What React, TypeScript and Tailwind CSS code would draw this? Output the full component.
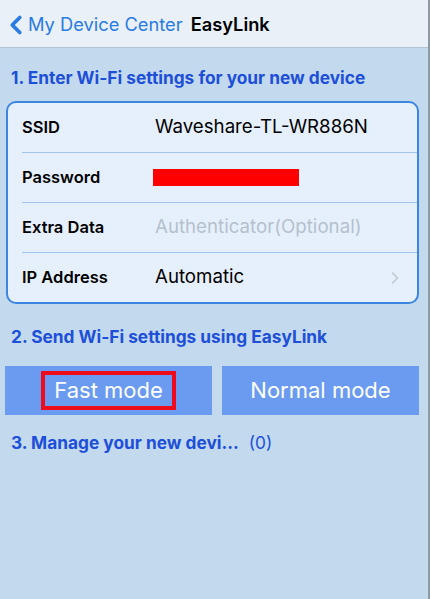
import { ChevronLeft, ChevronRight } from "lucide-react"

const rows = [
  { label: "SSID", value: "Waveshare-TL-WR886N" },
  { label: "Password", value: "" },
  { label: "Extra Data", value: "Authenticator(Optional)" },
  { label: "IP Address", value: "Automatic" },
]

export default function App() {
  return (
    <div
      className="w-[430px] h-[599px] bg-[#c3d9ee] border-r-2 border-[#8e99a3] overflow-hidden"
      style={{ fontFamily: "Inter, 'Noto Sans', sans-serif" }}
    >
      {/* Nav bar */}
      <div className="h-[48px] bg-[#e9f0f8] border-b border-[#b4c4d4] flex items-center pt-[3px]">
        <ChevronLeft className="w-[30px] h-[30px] text-[#2a7be2] ml-[1px]" strokeWidth={3} />
        <span className="text-[18.3px] text-[#2a7be2] ml-[-3px]">My Device Center</span>
        <span className="text-[18.3px] font-semibold text-black ml-[8px]">EasyLink</span>
      </div>

      <div className="h-[53px] flex items-center px-[11px] pt-[6px]">
        <span className="text-[17.3px] font-bold text-[#1d4fd8]">1. Enter Wi-Fi settings for your new device</span>
      </div>

      {/* Settings card */}
      <div className="ml-[6px] mr-[9px] h-[203px] rounded-[10px] border-2 border-[#3d86e0] bg-[#e6f0fc] flex flex-col">
        {rows.map((row, i) => (
          <div
            key={row.label}
            className={`flex-1 flex items-center ml-[14px] ${i < rows.length - 1 ? "border-b border-[#9ec3ee]" : ""}`}
          >
            <span className="w-[133px] text-[16.5px] font-semibold text-black">{row.label}</span>
            {row.label === "Password" ? (
              <div className="w-[146px] h-[17px] bg-[#ff0000] ml-[-2px]" />
            ) : (
              <span
                className={`text-[18.7px] ${row.label === "Extra Data" ? "text-[#b5c0cd]" : "text-black"}`}
              >
                {row.value}
              </span>
            )}
            {row.label === "IP Address" && (
              <ChevronRight className="w-[20px] h-[20px] text-[#c2c8cf] ml-auto mr-[12px]" strokeWidth={2} />
            )}
          </div>
        ))}
      </div>

      <div className="h-[62px] flex items-center px-[11px] pt-[4px]">
        <span className="text-[17.3px] font-bold text-[#1d4fd8]">2. Send Wi-Fi settings using EasyLink</span>
      </div>

      {/* Mode buttons */}
      <div className="flex gap-[10px] pl-[5px] pr-[9px]">
        <div className="w-[207px] h-[49px] bg-[#6a9bf0] flex items-center justify-center">
          <div className="border-[4px] border-[#ee0b1b] w-[135px] h-[39px] flex items-center justify-center">
            <span className="text-[22px] text-white">Fast mode</span>
          </div>
        </div>
        <div className="flex-1 h-[49px] bg-[#6a9bf0] flex items-center justify-center">
          <span className="text-[22px] text-white">Normal mode</span>
        </div>
      </div>

      <div className="h-[56px] flex items-center px-[11px]">
        <span className="text-[17.3px] font-bold text-[#1d4fd8]">3. Manage your new devi...</span>
        <span className="text-[17.3px] text-[#1d4fd8] ml-[10px]">(0)</span>
      </div>
    </div>
  )
}
